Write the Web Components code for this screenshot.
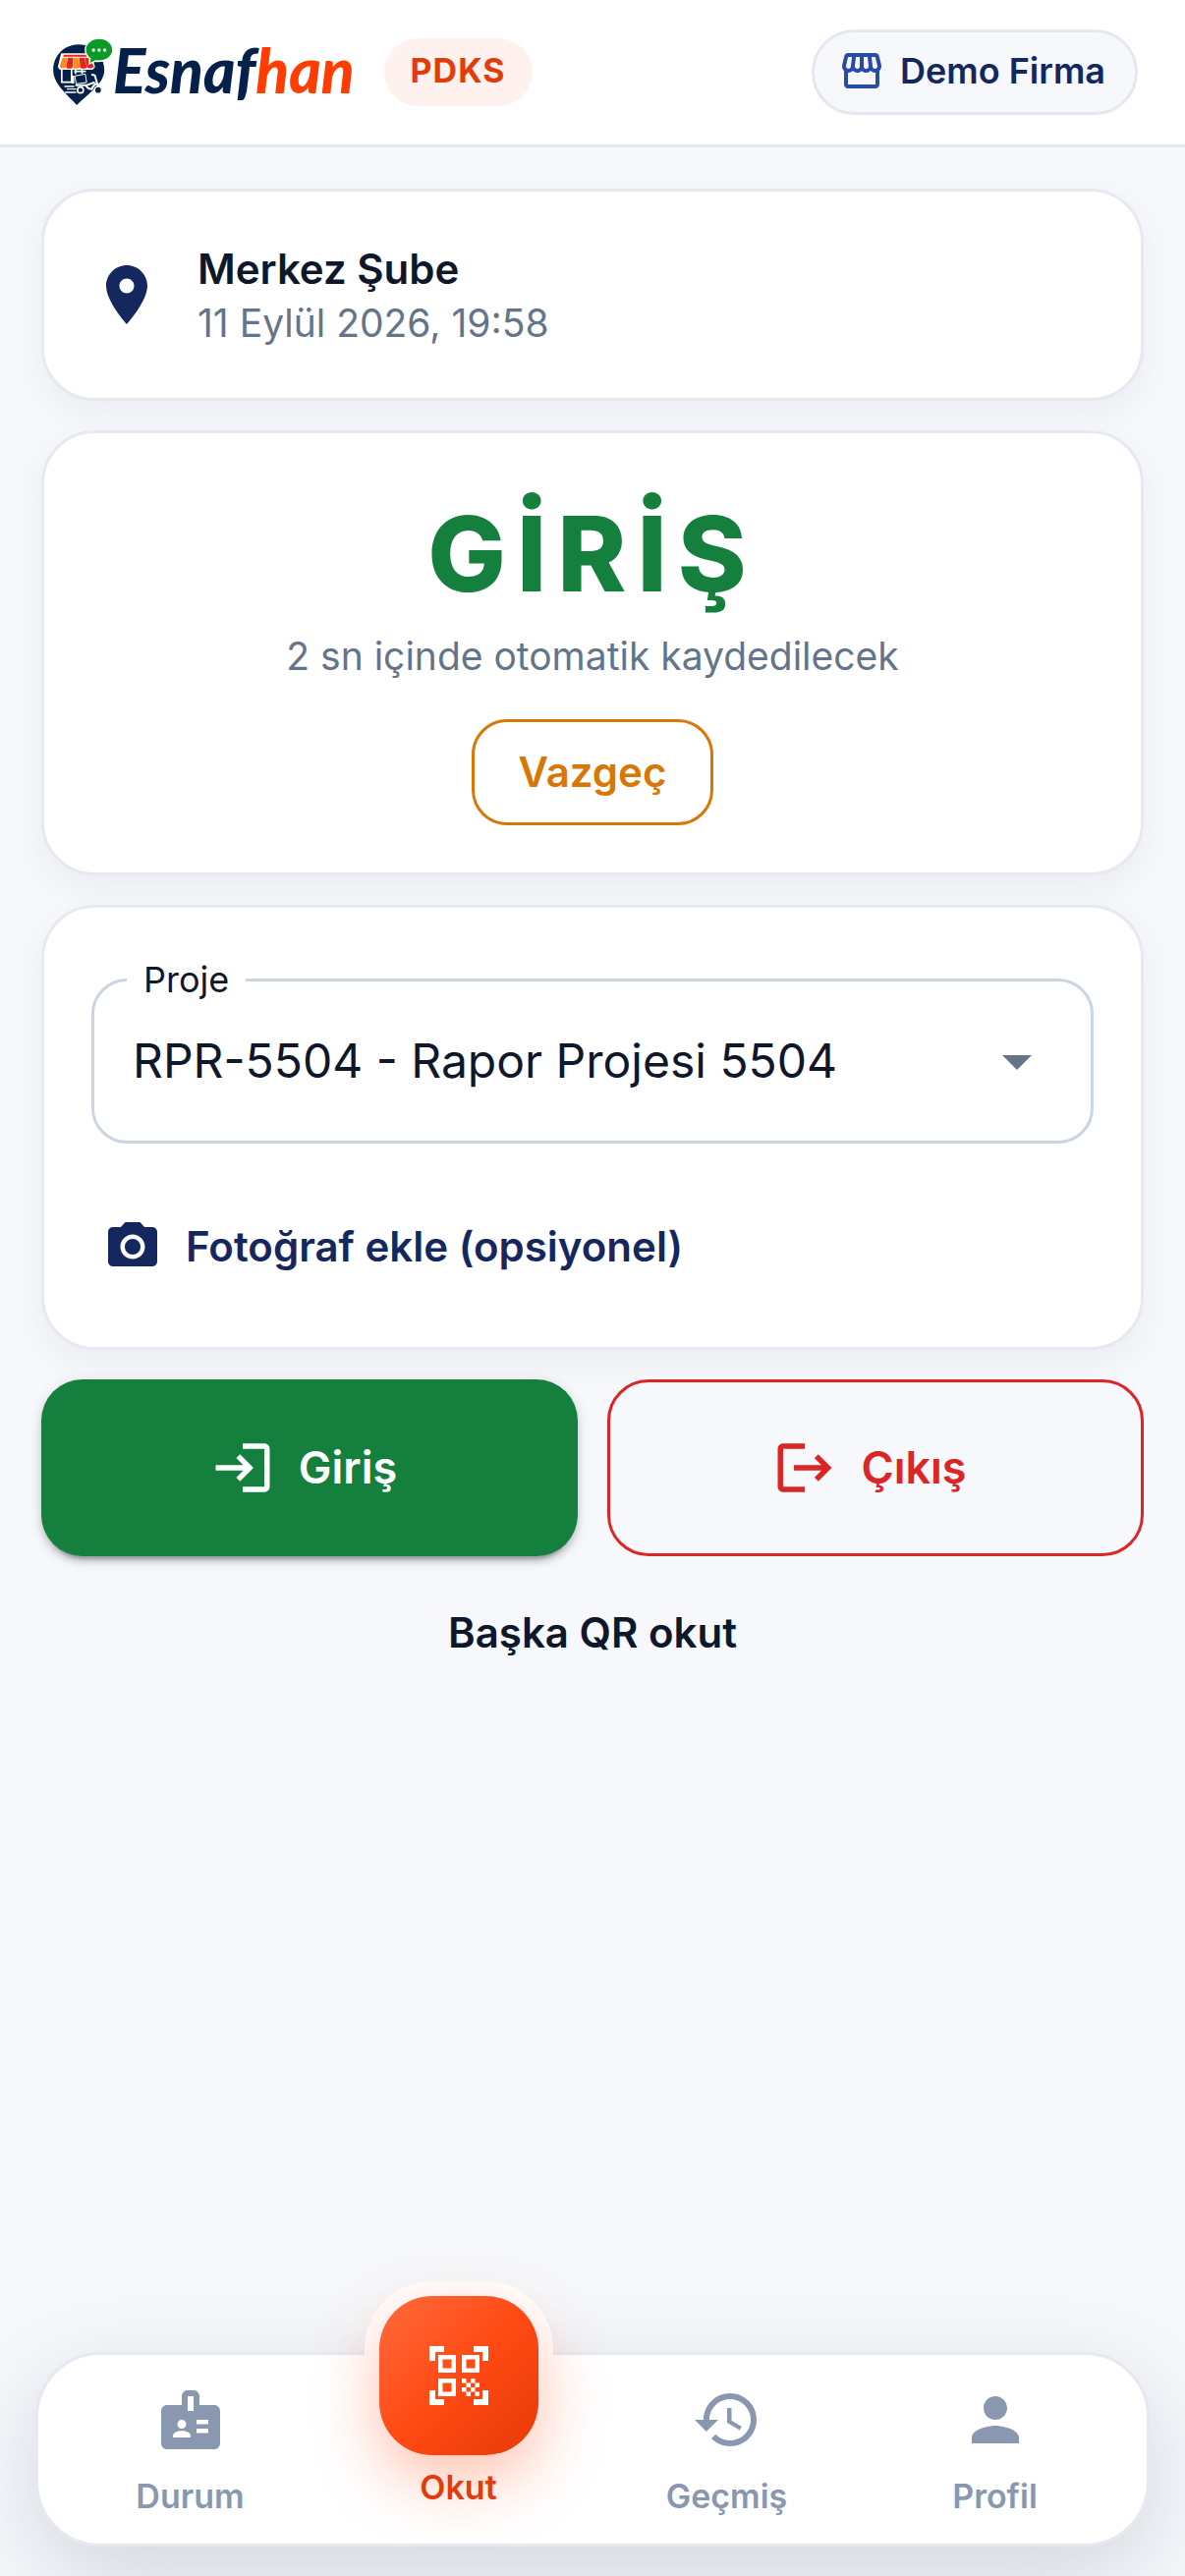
<!DOCTYPE html>
<html lang="tr">
<head>
<meta charset="utf-8">
<meta name="viewport" content="width=device-width, initial-scale=1">
<title>Esnafhan PDKS</title>
<style>
  :root {
    --navy: #14275e;
    --ink: #0f172a;
    --muted: #64748b;
    --soft: #8a97b1;
    --line: #e6e9f0;
    --page: #f6f8fc;
    --green: #15803d;
    --red: #dc2626;
    --amber: #d97706;
    --orange: #e23c0c;
  }

  body {
    margin: 0;
    background: var(--page);
    color: var(--ink);
    font-family: Inter, "Liberation Sans", sans-serif;
    font-size: 42px;
  }
</style>
</head>
<body>
<pdks-app>
  <app-header slot="header" product="PDKS" company="Demo Firma"></app-header>

  <app-card>
    <branch-info name="Merkez Şube" time="11 Eylül 2026, 19:58"></branch-info>
  </app-card>

  <app-card>
    <scan-result heading="GİRİŞ" note="2 sn içinde otomatik kaydedilecek">
      <app-button variant="amber">Vazgeç</app-button>
    </scan-result>
  </app-card>

  <app-card>
    <project-form label="Proje" value="RPR-5504 - Rapor Projesi 5504">
      <app-button variant="text" icon="camera">Fotoğraf ekle (opsiyonel)</app-button>
    </project-form>
  </app-card>

  <action-row>
    <app-button variant="green" icon="login">Giriş</app-button>
    <app-button variant="red" icon="logout">Çıkış</app-button>
  </action-row>

  <app-button variant="plain">Başka QR okut</app-button>

  <bottom-nav slot="nav">
    <nav-item icon="badge" href="#durum">Durum</nav-item>
    <nav-item icon="scan" href="#okut" primary>Okut</nav-item>
    <nav-item icon="history" href="#gecmis">Geçmiş</nav-item>
    <nav-item icon="person" href="#profil">Profil</nav-item>
  </bottom-nav>
</pdks-app>

<script>
/** Icon outlines on a 24 unit grid. */
const ICONS = {
  store: 'M21.9 8.89l-1.05-4.37c-.22-.9-1-1.52-1.91-1.52H5.05c-.9 0-1.69.63-1.9 1.52L2.1 8.89c-.24 1.02-.02 2.06.62 2.88.08.11.19.19.28.29V19c0 1.1.9 2 2 2h14c1.1 0 2-.9 2-2v-6.94c.09-.09.2-.18.28-.28.64-.82.87-1.87.62-2.89zm-2.99-3.9l1.05 4.37c.1.42.01.84-.25 1.17-.14.18-.44.47-.94.47-.61 0-1.14-.49-1.21-1.14L16.98 5l1.93-.01zM13 5h1.96l.54 4.52c.05.39-.07.78-.33 1.07-.22.26-.54.41-.95.41-.67 0-1.22-.59-1.22-1.31V5zM8.49 9.52L9.04 5H11v4.69c0 .72-.55 1.31-1.29 1.31-.34 0-.65-.15-.89-.41-.25-.29-.37-.68-.33-1.07zm-4.45-.16L5.05 5h1.97l-.58 4.86c-.08.65-.6 1.14-1.21 1.14-.49 0-.8-.29-.93-.47-.27-.32-.36-.75-.26-1.17zM5 19v-6.03c.08.01.15.03.23.03.87 0 1.66-.36 2.24-.95.6.6 1.4.95 2.31.95.87 0 1.65-.36 2.23-.93.59.57 1.39.93 2.29.93.84 0 1.64-.35 2.24-.95.58.59 1.37.95 2.24.95.08 0 .15-.02.23-.03V19H5z',
  place: 'M12 2C8.13 2 5 5.13 5 9c0 5.25 7 13 7 13s7-7.75 7-13c0-3.87-3.13-7-7-7zm0 9.5c-1.38 0-2.5-1.12-2.5-2.5s1.12-2.5 2.5-2.5 2.5 1.12 2.5 2.5-1.12 2.5-2.5 2.5z',
  camera: 'M12 8.8a3.2 3.2 0 1 0 0 6.4 3.2 3.2 0 1 0 0-6.4zM9 2L7.17 4H4c-1.1 0-2 .9-2 2v12c0 1.1.9 2 2 2h16c1.1 0 2-.9 2-2V6c0-1.1-.9-2-2-2h-3.17L15 2H9zm3 15c-2.76 0-5-2.24-5-5s2.24-5 5-5 5 2.24 5 5-2.24 5-5 5z',
  login: 'M11 7L9.6 8.4l2.6 2.6H2v2h10.2l-2.6 2.6L11 17l5-5-5-5zm9 12h-8v2h8c1.1 0 2-.9 2-2V5c0-1.1-.9-2-2-2h-8v2h8v14z',
  logout: 'M17 7l-1.41 1.41L18.17 11H8v2h10.17l-2.58 2.58L17 17l5-5zM4 5h8V3H4c-1.1 0-2 .9-2 2v14c0 1.1.9 2 2 2h8v-2H4V5z',
  dropdown: 'M7 10l5 5 5-5z',
  badge: 'M20 7h-5V4c0-1.1-.9-2-2-2h-2c-1.1 0-2 .9-2 2v3H4c-1.1 0-2 .9-2 2v11c0 1.1.9 2 2 2h16c1.1 0 2-.9 2-2V9c0-1.1-.9-2-2-2zM9 12c.83 0 1.5.67 1.5 1.5S9.83 15 9 15s-1.5-.67-1.5-1.5S8.17 12 9 12zm3 6H6v-.43c0-.6.36-1.15.92-1.39.64-.28 1.34-.43 2.08-.43s1.44.15 2.08.43c.55.24.92.78.92 1.39V18zm1-9h-2V4h2v5zm5 7.5h-4V15h4v1.5zm0-3h-4V12h4v1.5z',
  scan: 'M9.5 6.5v3h-3v-3h3M11 5H5v6h6V5zm-1.5 9.5v3h-3v-3h3M11 13H5v6h6v-6zm6.5-6.5v3h-3v-3h3M19 5h-6v6h6V5zm-6 8h1.5v1.5H13V13zm1.5 1.5H16V16h-1.5v-1.5zM16 13h1.5v1.5H16V13zm-3 3h1.5v1.5H13V16zm1.5 1.5H16V19h-1.5v-1.5zM16 16h1.5v1.5H16V16zm1.5-1.5H19V16h-1.5v-1.5zm0 3H19V19h-1.5v-1.5zM22 7h-2V4h-3V2h5v5zm0 15v-5h-2v3h-3v2h5zM2 22h5v-2H4v-3H2v5zM2 2v5h2V4h3V2H2z',
  history: 'M13 3c-4.97 0-9 4.03-9 9H1l3.89 3.89.07.14L9 12H6c0-3.87 3.13-7 7-7s7 3.13 7 7-3.13 7-7 7c-1.93 0-3.68-.79-4.94-2.06l-1.42 1.42C8.27 19.99 10.51 21 13 21c4.97 0 9-4.03 9-9s-4.03-9-9-9zm-1 5v5l4.28 2.54.72-1.21-3.5-2.08V8H12z',
  person: 'M12 12c2.21 0 4-1.79 4-4s-1.79-4-4-4-4 1.79-4 4 1.79 4 4 4zm0 2c-2.67 0-8 1.34-8 4v2h16v-2c0-2.66-5.33-4-8-4z'
};

/** Shared base: renders the subclass template into an open shadow root once. */
class BaseElement extends HTMLElement {
  connectedCallback() {
    if (this.shadowRoot) return;
    this.attachShadow({ mode: 'open' });
    this.shadowRoot.innerHTML = this.render();
  }

  attr(name) {
    return this.getAttribute(name) || '';
  }
}

/**
 * Usage: <app-icon name="login"></app-icon>, sized with --icon-size
 */
class AppIcon extends BaseElement {
  render() {
    return `
      <style>
        :host { display: block; flex: none; width: var(--icon-size, 72px); height: var(--icon-size, 72px); }
        svg { display: block; width: 100%; height: 100%; fill: currentColor; }
      </style>
      <svg viewBox="0 0 24 24" aria-hidden="true"><path fill-rule="nonzero" d="${ICONS[this.attr('name')]}"/></svg>
    `;
  }
}

class PdksApp extends BaseElement {
  render() {
    return `
      <style>
        :host { display: flex; flex-direction: column; min-height: 100vh; overflow: hidden; }
        main { flex: 1; display: flex; flex-direction: column; gap: 30px; padding: 42px; }
      </style>
      <slot name="header"></slot>
      <main><slot></slot></main>
      <slot name="nav"></slot>
    `;
  }
}

class BrandLogo extends BaseElement {
  render() {
    return `
      <style>
        :host { display: flex; align-items: center; }
        svg { display: block; width: 67px; height: 69px; }
        .word {
          padding-bottom: 6px;
          color: #05204a;
          font: italic 900 62px/72px Lato, "Open Sans", sans-serif;
          font-variant-ligatures: none;
        }
        .accent { color: #ff3d00; }
      </style>
      <svg viewBox="24 33 200 207" aria-hidden="true">
        <path fill="#05204a" d="M120 52c-44 0-78 34-78 78 0 42 40 72 72 107 36-35 84-66 84-107 0-44-34-78-78-78z"/>
        <path fill="#fff" d="M66 79h92l12 42-8 8H62l-6-8z"/>
        <path fill="#e5251d" d="M74 83h78l3 6H72z"/>
        <path fill="#ff8a1f" d="M70 92h16l-6 30q-10 6-18-2zM104 92h17l2 30q-12 7-21 0z"/>
        <path fill="#e5251d" d="M87 92h16l-2 30q-10 7-20 0zM122 92h15l8 30q-11 7-21 0zM138 92h16l12 28q-9 8-20 2z"/>
        <path fill="none" stroke="#fff" stroke-width="5" d="M68 126v41h30v-41M110 128v14M130 128v14M106 134h36"/>
        <path fill="#fff" d="M98 147h8v24H98z"/>
        <path fill="#05204a" stroke="#fff" stroke-width="3" d="M108 148l32-6 4 26-32 4z"/>
        <path fill="none" stroke="#fff" stroke-width="6" stroke-linecap="round" stroke-linejoin="round" d="M161 144l8 2 10 34M112 176h30q4 12 18 12 6-16 18-16M145 176l22-8"/>
        <path fill="#fff" d="M76 178h30v4H76zM84 186h28v4H84zM78 196h34v4H78z"/>
        <g fill="#05204a" stroke="#fff" stroke-width="5">
          <circle cx="125" cy="191" r="9"/><circle cx="179" cy="191" r="11"/>
        </g>
        <path fill="#fff" d="M182 31c-24 0-44 16-44 37 0 12 5 21 13 27l-1 19 20-9c32 4 56-13 56-37 0-21-20-37-44-37z"/>
        <path fill="#0b9a26" d="M182 35c-22 0-40 14-40 33 0 11 6 20 15 26l-3 14 17-8c30 3 51-12 51-32 0-19-18-33-40-33z"/>
        <g fill="#fff"><circle cx="165" cy="69" r="5"/><circle cx="182" cy="69" r="5"/><circle cx="199" cy="69" r="5"/></g>
      </svg>
      <span class="word">Esnaf<span class="accent">han</span></span>
    `;
  }
}

class AppHeader extends BaseElement {
  render() {
    return `
      <style>
        :host { display: block; }
        header {
          display: flex;
          align-items: center;
          height: 147px;
          padding: 0 48px;
          background: #fff;
          border-bottom: 3px solid #e4e7ee;
        }
        .product {
          margin-left: 30px;
          padding: 0 27px 3px;
          border-radius: 36px;
          background: #fff2ee;
          color: var(--orange);
          font-size: 34px;
          font-weight: 700;
          line-height: 66px;
          letter-spacing: 1px;
        }
        button {
          --icon-size: 48px;
          display: flex;
          align-items: center;
          gap: 15px;
          height: 87px;
          margin-left: auto;
          padding: 0 30px 3px 24px;
          border: 3px solid #e4e7ee;
          border-radius: 44px;
          background: var(--page);
          color: var(--navy);
          font: 600 36px/48px Inter, sans-serif;
        }
        app-icon { color: #284ba5; }
      </style>
      <header>
        <brand-logo></brand-logo>
        <span class="product">${this.attr('product')}</span>
        <button type="button"><app-icon name="store"></app-icon>${this.attr('company')}</button>
      </header>
    `;
  }
}

class AppCard extends BaseElement {
  render() {
    return `
      <style>
        :host {
          display: block;
          padding: 48px;
          border: 3px solid var(--line);
          border-radius: 54px;
          background: #fff;
          box-shadow: 0 12px 36px rgba(15, 23, 42, .05);
        }
      </style>
      <slot></slot>
    `;
  }
}

class BranchInfo extends BaseElement {
  render() {
    return `
      <style>
        :host { display: flex; align-items: center; gap: 36px; min-height: 114px; }
        app-icon { color: var(--navy); }
        p { margin: 0; font-size: 39px; line-height: 54px; color: var(--muted); }
        .name { font-size: 42px; line-height: 57px; font-weight: 600; color: var(--ink); }
      </style>
      <app-icon name="place"></app-icon>
      <div>
        <p class="name">${this.attr('name')}</p>
        <p>${this.attr('time')}</p>
      </div>
    `;
  }
}

class ScanResult extends BaseElement {
  render() {
    return `
      <style>
        :host { display: flex; flex-direction: column; align-items: center; }
        h1 {
          margin: 0;
          color: var(--green);
          font-size: 106px;
          font-weight: 800;
          line-height: 150px;
          letter-spacing: 11px;
        }
        p { margin: 0 0 36px; color: var(--muted); font-size: 39px; line-height: 57px; }
      </style>
      <h1>${this.attr('heading')}</h1>
      <p>${this.attr('note')}</p>
      <slot></slot>
    `;
  }
}

/**
 * Usage: <app-button variant="green" icon="login">Giriş</app-button>
 */
class AppButton extends BaseElement {
  render() {
    const icon = this.attr('icon');
    return `
      <style>
        :host { display: block; }
        button {
          display: flex;
          align-items: center;
          justify-content: center;
          gap: 24px;
          box-sizing: border-box;
          width: 100%;
          height: 108px;
          padding: 0 45px;
          border: 3px solid transparent;
          border-radius: 36px;
          background: none;
          color: var(--ink);
          font: 600 42px/60px Inter, sans-serif;
        }
        app-icon { margin-left: -12px; }
        .amber { border-color: var(--amber); color: var(--amber); }
        .plain { height: 96px; }
        .text { --icon-size: 60px; width: auto; padding: 0 21px; color: var(--navy); }
        .green, .red { --icon-size: 66px; height: 180px; border-radius: 42px; font-size: 45px; }
        .green {
          background: var(--green);
          color: #fff;
          border: 0;
          box-shadow: 0 9px 3px -6px rgba(0, 0, 0, .2), 0 6px 6px rgba(0, 0, 0, .14), 0 3px 15px rgba(0, 0, 0, .12);
        }
        .red { border-color: var(--red); color: var(--red); }
      </style>
      <button type="button" class="${this.attr('variant')}">
        ${icon ? `<app-icon name="${icon}"></app-icon>` : ''}<slot></slot>
      </button>
    `;
  }
}

class ProjectForm extends BaseElement {
  render() {
    return `
      <style>
        :host { display: flex; flex-direction: column; gap: 51px; }
        fieldset {
          min-width: 0;
          margin: 0;
          padding: 0 39px 24px 33px;
          border: 3px solid #cbd5e1;
          border-radius: 36px;
        }
        legend { padding: 0 17px; font-size: 36px; line-height: 51px; }
        .field { display: grid; align-items: center; }
        select, app-icon { grid-area: 1 / 1; }
        select {
          appearance: none;
          height: 114px;
          padding: 0 72px 0 6px;
          border: 0;
          background: none;
          color: var(--ink);
          font: 400 48px/72px Inter, sans-serif;
        }
        app-icon { justify-self: end; color: var(--muted); pointer-events: none; }
      </style>
      <fieldset>
        <legend><label for="project">${this.attr('label')}</label></legend>
        <div class="field">
          <select id="project"><option>${this.attr('value')}</option></select>
          <app-icon name="dropdown"></app-icon>
        </div>
      </fieldset>
      <slot></slot>
    `;
  }
}

class ActionRow extends BaseElement {
  render() {
    return `
      <style>
        :host { display: grid; grid-template-columns: 1fr 1fr; gap: 30px; }
      </style>
      <slot></slot>
    `;
  }
}

class BottomNav extends BaseElement {
  render() {
    return `
      <style>
        :host { display: block; margin: 0 36px 30px; }
        nav {
          display: grid;
          grid-template-columns: repeat(4, 1fr);
          height: 192px;
          padding: 0 18px;
          border: 3px solid var(--line);
          border-radius: 66px;
          background: #fff;
          box-shadow: 0 30px 96px rgba(15, 23, 42, .15);
        }
      </style>
      <nav><slot></slot></nav>
    `;
  }
}

class NavItem extends BaseElement {
  render() {
    return `
      <style>
        :host { display: block; }
        a {
          display: flex;
          flex-direction: column;
          align-items: center;
          gap: 21px;
          padding-top: 30px;
          color: var(--soft);
          font-size: 34px;
          font-weight: 600;
          line-height: 42px;
          text-decoration: none;
        }
        :host([primary]) a { gap: 12px; color: var(--orange); }
        :host([primary]) .icon {
          margin-top: -90px;
          padding: 45px;
          border-radius: 54px;
          background: linear-gradient(135deg, #ff6a3d 0%, #ff4a14 50%, #e63a08 100%);
          color: #fff;
          box-shadow: 0 24px 66px rgba(255, 74, 20, .35), 0 0 0 15px #fff;
        }
      </style>
      <a href="${this.attr('href')}">
        <span class="icon"><app-icon name="${this.attr('icon')}"></app-icon></span>
        <span><slot></slot></span>
      </a>
    `;
  }
}

customElements.define('app-icon', AppIcon);
customElements.define('brand-logo', BrandLogo);
customElements.define('app-header', AppHeader);
customElements.define('app-card', AppCard);
customElements.define('branch-info', BranchInfo);
customElements.define('scan-result', ScanResult);
customElements.define('app-button', AppButton);
customElements.define('project-form', ProjectForm);
customElements.define('action-row', ActionRow);
customElements.define('bottom-nav', BottomNav);
customElements.define('nav-item', NavItem);
customElements.define('pdks-app', PdksApp);
</script>
</body>
</html>
